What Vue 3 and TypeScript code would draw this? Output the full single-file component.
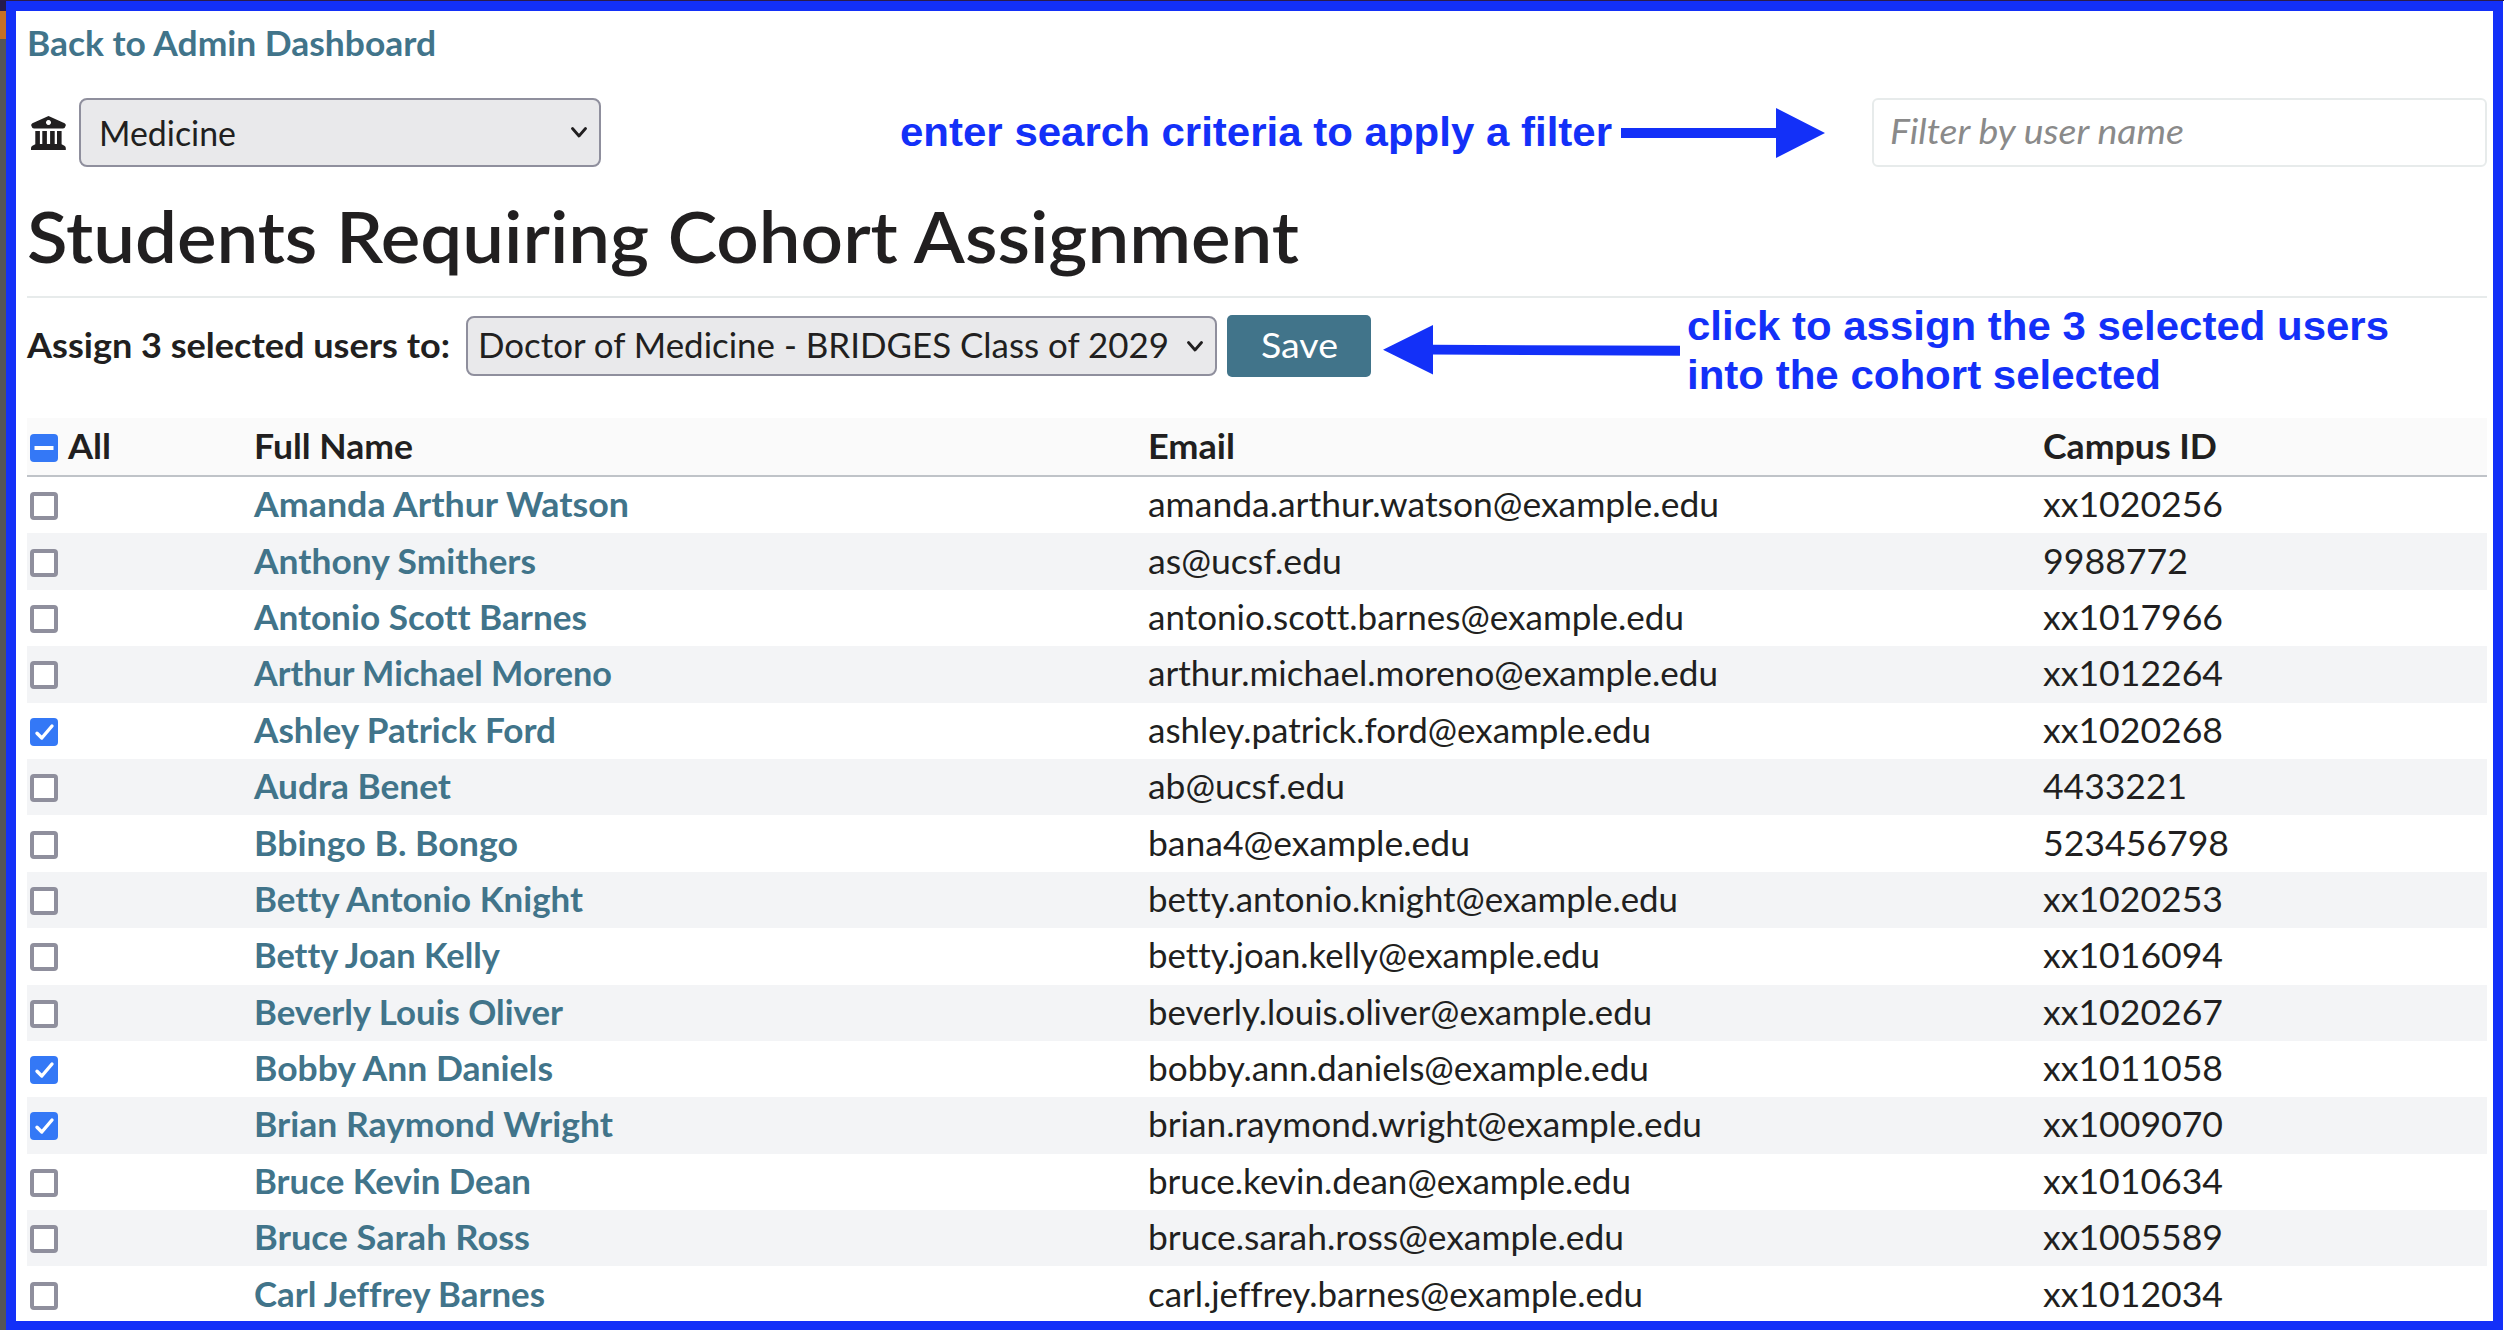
<script setup lang="ts">
import { computed, ref, type Directive } from 'vue'

interface Student {
  name: string
  nameWidth: number
  email: string
  emailWidth: number
  campusId: string
  idWidth: number
  selected: boolean
}

type Row = [string, number, string, number, string, number, boolean?]

const rows: Row[] = [
  ['Amanda Arthur Watson', 375, 'amanda.arthur.watson@example.edu', 571, 'xx1020256', 180],
  ['Anthony Smithers', 282, 'as@ucsf.edu', 194, '9988772', 145],
  ['Antonio Scott Barnes', 333, 'antonio.scott.barnes@example.edu', 536, 'xx1017966', 180],
  ['Arthur Michael Moreno', 358, 'arthur.michael.moreno@example.edu', 570, 'xx1012264', 180],
  ['Ashley Patrick Ford', 302, 'ashley.patrick.ford@example.edu', 503, 'xx1020268', 180, true],
  ['Audra Benet', 197, 'ab@ucsf.edu', 197, '4433221', 144],
  ['Bbingo B. Bongo', 264, 'bana4@example.edu', 322, '523456798', 186],
  ['Betty Antonio Knight', 329, 'betty.antonio.knight@example.edu', 530, 'xx1020253', 180],
  ['Betty Joan Kelly', 246, 'betty.joan.kelly@example.edu', 452, 'xx1016094', 180],
  ['Beverly Louis Oliver', 309, 'beverly.louis.oliver@example.edu', 504, 'xx1020267', 180],
  ['Bobby Ann Daniels', 299, 'bobby.ann.daniels@example.edu', 501, 'xx1011058', 180, true],
  ['Brian Raymond Wright', 359, 'brian.raymond.wright@example.edu', 554, 'xx1009070', 180, true],
  ['Bruce Kevin Dean', 277, 'bruce.kevin.dean@example.edu', 483, 'xx1010634', 180],
  ['Bruce Sarah Ross', 276, 'bruce.sarah.ross@example.edu', 476, 'xx1005589', 180],
  ['Carl Jeffrey Barnes', 291, 'carl.jeffrey.barnes@example.edu', 495, 'xx1012034', 180],
]

const students = ref<Student[]>(
  rows.map(([name, nameWidth, email, emailWidth, campusId, idWidth, selected = false]) => ({
    name, nameWidth, email, emailWidth, campusId, idWidth, selected,
  })),
)
const selectedCount = computed(() => students.value.filter((s) => s.selected).length)

// Widens (or narrows) a label's letterforms so that it occupies the given width.
const vFit: Directive<HTMLElement, number> = {
  mounted(el, { value }) {
    const natural = el.getBoundingClientRect().width
    el.style.width = `${value}px`
    el.style.transform = `scaleX(${value / natural})`
  },
}
</script>

<template>
  <div class="shell">
    <div class="strip"><i class="strip-top"></i><i class="strip-mark"></i></div>
    <main class="frame">
      <div class="back"><a class="link"><span v-fit="409" class="t">Back to Admin Dashboard</span></a></div>

      <div class="toolbar">
        <svg class="school-icon" viewBox="0 0 35 34">
          <path fill-rule="evenodd" d="M17.5 0 33.6 7.2Q35 8 34.8 9.6Q34.2 12.2 32 12.4H3Q.8 12.2.2 9.6Q0 8 1.4 7.2ZM17.5 4.1a2.5 2.5 0 1 0 .01 0Z" />
          <path d="M4.3 15h4.6v13h2.4V15h4.6v13h3.2V15h4.6v13h2.3V15h4.6v13.2l2.8 1.6q1.4.8 1.4 2.3V34H0v-1.9q0-1.5 1.4-2.3l2.9-1.6Z" />
        </svg>
        <div class="select school">
          <span v-fit="137" class="t">Medicine</span>
          <svg class="chevron" viewBox="0 0 16 11"><path d="M1.5 1.5 8 9l6.5-7.5" /></svg>
        </div>
        <div class="filter"><span v-fit="294" class="t">Filter by user name</span></div>
      </div>

      <h1><span v-fit="1272" class="t">Students Requiring Cohort Assignment</span></h1>

      <div class="assign">
        <span class="assign-label"><span v-fit="423" class="t">Assign {{ selectedCount }} selected users to:</span></span>
        <div class="select cohort">
          <span v-fit="691" class="t">Doctor of Medicine - BRIDGES Class of 2029</span>
          <svg class="chevron" viewBox="0 0 16 11"><path d="M1.5 1.5 8 9l6.5-7.5" /></svg>
        </div>
        <div class="save"><span v-fit="77" class="t">Save</span></div>
      </div>

      <section class="table">
        <div class="row head">
          <div class="check-cell">
            <span class="box on"><svg viewBox="0 0 28 28"><path class="dash" d="M4.5 14h19" /></svg></span>
            <span v-fit="43" class="t">All</span>
          </div>
          <div><span v-fit="159" class="t">Full Name</span></div>
          <div><span v-fit="87" class="t">Email</span></div>
          <div><span v-fit="174" class="t">Campus ID</span></div>
        </div>
        <div v-for="s in students" :key="s.name" class="row body">
          <div class="check-cell">
            <span class="box" :class="{ on: s.selected }" @click="s.selected = !s.selected">
              <svg v-if="s.selected" viewBox="0 0 28 28"><path d="M7 15.2 11.8 20 22 8" /></svg>
            </span>
          </div>
          <div><a class="link"><span v-fit="s.nameWidth" class="t">{{ s.name }}</span></a></div>
          <div><span v-fit="s.emailWidth" class="t">{{ s.email }}</span></div>
          <div><span v-fit="s.idWidth" class="t">{{ s.campusId }}</span></div>
        </div>
      </section>
    </main>

    <div class="note note-filter">
      <span v-fit="712" class="t">enter search criteria to apply a filter</span>
      <svg width="204" height="50" viewBox="0 0 204 50"><path d="M0 20h155V0l49 25-49 25V30H0Z" /></svg>
    </div>
    <div class="note note-save">
      <svg width="297" height="50" viewBox="0 0 297 50"><path d="M297 20.8 50 19.8V0L0 24.7 50 49.5V29.4l247 1.3Z" /></svg>
      <div class="note-lines">
        <span v-fit="702" class="t">click to assign the 3 selected users</span>
        <span v-fit="474" class="t">into the cohort selected</span>
      </div>
    </div>
  </div>
</template>

<style>
body { margin: 0; background: #fff; overflow: hidden; }
</style>

<style scoped>
* { box-sizing: border-box; }
.shell {
  position: relative;
  display: flex;
  width: 2504px;
  height: 1330px;
  padding-right: 1px;
  border-top: 1px solid #2a1c4c;
  overflow: hidden;
  font-family: Lato, "Open Sans", sans-serif;
  font-size: 34.5px;
  line-height: 42px;
  color: #211f20;
  background: #fff;
  font-kerning: normal;
  font-variant-ligatures: none;
}
.t { display: inline-block; white-space: nowrap; transform-origin: 0 50%; }
.strip { width: 6px; display: flex; flex-direction: column; background: #555; }
.strip-top { height: 10px; background: #251b4c; }
.strip-mark { height: 28px; background: #c57026; }
.frame {
  flex: 1;
  height: 1329px;
  border: 10px solid #1330f8;
  border-bottom-width: 9px;
  padding: 0 6px 0 11px;
}
.link { color: #41748a; font-weight: 700; }
.back { height: 62px; display: flex; align-items: center; padding-top: 2px; }
.toolbar { display: flex; align-items: center; height: 69px; margin-top: 25px; }
.school-icon { width: 35px; height: 34px; margin-left: 4px; fill: #211f20; }
.select {
  display: flex;
  align-items: center;
  justify-content: space-between;
  border: 2px solid #8f8f9d;
  border-radius: 8px;
  background: #e9e9eb;
}
.chevron { width: 16px; height: 11px; flex: none; fill: none; stroke: #211f20; stroke-width: 2.8; stroke-linecap: round; stroke-linejoin: round; }
.school { width: 522px; height: 69px; margin-left: 13px; padding: 0 12px 0 18px; }
.filter {
  display: flex;
  align-items: center;
  width: 615px;
  height: 69px;
  margin-left: auto;
  padding: 0 0 4px 16px;
  border: 2px solid #e7ebeb;
  border-radius: 6px;
  color: #8a8a8a;
  font-style: italic;
}
h1 {
  display: flex;
  align-items: center;
  height: 131px;
  margin: 0;
  padding-top: 9px;
  border-bottom: 2px solid #e7ebeb;
  font-size: 71px;
  line-height: 86px;
  font-weight: 600;
}
.assign { display: flex; align-items: center; height: 62px; margin-top: 17px; }
.assign-label { width: 439px; padding-bottom: 3px; font-weight: 700; }
.cohort { width: 751px; height: 60px; padding: 0 12px 3px 10px; }
.cohort .chevron { margin-top: 4px; }
.save {
  display: flex;
  align-items: center;
  justify-content: center;
  width: 144px;
  height: 62px;
  margin-left: 10px;
  padding-bottom: 3px;
  border-radius: 5px;
  background: #41748a;
  color: #fff;
}
.table { margin-top: 41px; }
.row {
  display: grid;
  grid-template-columns: 227px 894px 895px 1fr;
  align-items: center;
  padding-bottom: 2px;
}
.head { height: 59px; border-bottom: 2px solid #bfc3c8; background: #fafafa; font-weight: 700; }
.body { height: 56.4px; }
.body:nth-child(odd) { background: #f3f4f6; }
.check-cell { display: flex; align-items: center; gap: 10px; padding-left: 3px; }
.box {
  width: 28px;
  height: 28px;
  margin-top: 4px;
  border: 4px solid #8f8f9d;
  border-radius: 4px;
  background: #fff;
}
.body .check-cell { height: 42px; }
.box.on { border: 0; background: #3478f6; }
.box svg { display: block; width: 28px; height: 28px; fill: none; stroke: #fff; stroke-width: 3.4; stroke-linecap: round; stroke-linejoin: round; }
.box .dash { stroke-width: 4; stroke-linecap: butt; }
.note {
  position: absolute;
  display: flex;
  font: 700 41.5px/49px "Liberation Sans", Arial, sans-serif;
  color: #1330f8;
}
.note svg { fill: #1330f8; flex: none; }
.note-filter { left: 900px; top: 107px; gap: 9px; }
.note-filter .t { margin-top: -1px; }
.note-save { left: 1383px; top: 300px; gap: 7px; }
.note-save svg { margin-top: 24px; }
.note-lines { display: flex; flex-direction: column; align-items: flex-start; }
</style>
